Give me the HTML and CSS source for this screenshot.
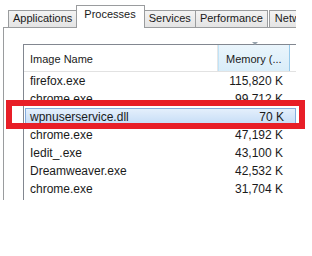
FILE: index.html
```html
<!doctype html>
<html>
<head>
    <meta charset="utf-8">
    <title>Task Manager - Processes</title>
    <link rel="stylesheet" href="styles.css">
</head>
<body>
    <div class="stage">
        <div class="shot">
            <div class="tabs">
                <div class="tab">Applications</div>
                <div class="tab active">Processes</div>
                <div class="tab">Services</div>
                <div class="tab">Performance</div>
                <div class="tab last">Networking</div>
            </div>
            <div class="panel">
                <div class="list">
                    <div class="head">
                        <div class="col-name">Image Name</div>
                        <div class="col-mem sorted">Memory (...<span class="arrow"></span></div>
                    </div>
                    <div class="row"><div class="col-name">firefox.exe</div><div class="col-mem">115,820 K</div></div>
                    <div class="row"><div class="col-name">chrome.exe</div><div class="col-mem">99,712 K</div></div>
                    <div class="row selected"><div class="col-name">wpnuserservice.dll</div><div class="col-mem">70 K</div></div>
                    <div class="row"><div class="col-name">chrome.exe</div><div class="col-mem">47,192 K</div></div>
                    <div class="row"><div class="col-name">Iedit_.exe</div><div class="col-mem">43,100 K</div></div>
                    <div class="row"><div class="col-name">Dreamweaver.exe</div><div class="col-mem">42,532 K</div></div>
                    <div class="row"><div class="col-name">chrome.exe</div><div class="col-mem">31,704 K</div></div>
                </div>
            </div>
        </div>
        <!-- red highlight drawn over the list -->
        <div class="mark"></div>
    </div>
</body>
</html>
```

FILE: styles.css
```css
body {
    margin: 0;
    background: #fff;
    font-family: "Liberation Sans", Arial, sans-serif;
    color: #1a1a1a;
}

.stage {
    position: relative;
    width: 312px;
    height: 256px;
}

.shot {
    width: 296px;
    height: 200px;
    overflow: hidden;
}

/* tab strip */
.tabs {
    display: flex;
    align-items: flex-end;
    height: 27px;
    padding-left: 8px;
    white-space: nowrap;
}

.tab {
    font-size: 11px;
    height: 16px;
    line-height: 15px;
    padding: 0 4px;
    border: 1px solid #9a9c9e;
    border-bottom: none;
    border-left: none;
    background: linear-gradient(#f3f3f3, #e4e4e4);
}

.tab:first-child {
    border-left: 1px solid #9a9c9e;
}

.tab.last {
    padding-left: 5px;
    margin-left: 1px;
    border-left: 1px solid #9a9c9e;
}

.tab.active {
    height: 22px;
    line-height: 16px;
    padding: 0 8px 0 7px;
    margin: 0 0 -1px -1px;
    border-left: 1px solid #9a9c9e;
    background: #fff;
    position: relative;
}

.panel {
    border-top: 1px solid #9a9c9e;
    border-left: 1px solid #9a9c9e;
    margin-left: 3px;
    padding: 16px 0 0 19px;
    height: 200px;
}

/* process list */
.list {
    border-top: 1px solid #828790;
    border-left: 1px solid #828790;
    height: 200px;
}

.head {
    display: flex;
    height: 26px;
    border-bottom: 1px solid #e2e2e2;
    font-size: 11px;
    line-height: 28px;
}

.head .col-name {
    width: 194px;
    padding-left: 6px;
    border-right: 1px solid #e6e6e6;
    box-sizing: border-box;
}

.head .col-mem {
    position: relative;
    width: 72px;
    box-sizing: border-box;
    padding-left: 7px;
}

.head .sorted {
    background: linear-gradient(#eaf5fc, #d9edf9);
    border-left: 1px solid #c1e3f7;
    border-right: 1px solid #96c9ea;
}

.arrow {
    position: absolute;
    left: 33px;
    top: -3px;
    border-left: 3px solid transparent;
    border-right: 3px solid transparent;
    border-top: 3px solid #97a3ad;
}

.row {
    display: flex;
    height: 18px;
    line-height: 18px;
    font-size: 12px;
    box-sizing: border-box;
}

.row .col-name {
    width: 195px;
    padding-left: 6px;
    box-sizing: border-box;
}

.row .col-mem {
    width: 64px;
    text-align: right;
}

.row.selected {
    background: linear-gradient(#e4effc, #c4dcf6);
    border: 1px solid #84acdd;
    line-height: 16px;
    margin-left: 1px;
}

.row.selected .col-name {
    width: 194px;
    padding-left: 4px;
}

.mark {
    position: absolute;
    left: 6px;
    top: 100px;
    width: 287px;
    height: 17px;
    border: 6px solid #e81e27;
}
```
